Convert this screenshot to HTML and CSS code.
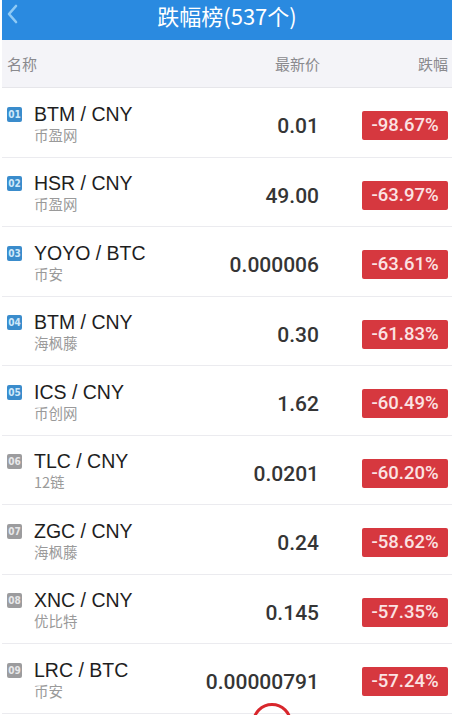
FILE: index.html
```html
<!DOCTYPE html>
<html lang="zh-CN">
<head>
    <meta charset="UTF-8">
    <meta name="viewport" content="width=device-width, initial-scale=1.0">
    <title>跌幅榜</title>
    <link rel="stylesheet" href="styles.css">
</head>
<body>

<div class="page">
    <div class="topbar">
        <a href="#" class="back">
            <svg width="12" height="20" viewBox="0 0 12 20"><path d="M10 2 L3 10 L10 18" fill="none" stroke="#8fcaf5" stroke-width="2.6" stroke-linecap="round" stroke-linejoin="round"/></svg>
        </a>
        <div class="title">跌幅榜(537个)</div>
    </div>

    <div class="thead">
        <span class="th-name">名称</span>
        <span class="th-price">最新价</span>
        <span class="th-change">跌幅</span>
    </div>

    <ul class="list">
        <li class="row">
            <div class="coin"><i class="no blue">01</i><div class="info"><p class="pair">BTM / CNY</p><p class="market">币盈网</p></div></div>
            <div class="price">0.01</div>
            <div class="change">-98.67%</div>
        </li>
        <li class="row">
            <div class="coin"><i class="no blue">02</i><div class="info"><p class="pair">HSR / CNY</p><p class="market">币盈网</p></div></div>
            <div class="price">49.00</div>
            <div class="change">-63.97%</div>
        </li>
        <li class="row">
            <div class="coin"><i class="no blue">03</i><div class="info"><p class="pair">YOYO / BTC</p><p class="market">币安</p></div></div>
            <div class="price">0.000006</div>
            <div class="change">-63.61%</div>
        </li>
        <li class="row">
            <div class="coin"><i class="no blue">04</i><div class="info"><p class="pair">BTM / CNY</p><p class="market">海枫藤</p></div></div>
            <div class="price">0.30</div>
            <div class="change">-61.83%</div>
        </li>
        <li class="row">
            <div class="coin"><i class="no blue">05</i><div class="info"><p class="pair">ICS / CNY</p><p class="market">币创网</p></div></div>
            <div class="price">1.62</div>
            <div class="change">-60.49%</div>
        </li>
        <li class="row">
            <div class="coin"><i class="no">06</i><div class="info"><p class="pair">TLC / CNY</p><p class="market">12链</p></div></div>
            <div class="price">0.0201</div>
            <div class="change">-60.20%</div>
        </li>
        <li class="row">
            <div class="coin"><i class="no">07</i><div class="info"><p class="pair">ZGC / CNY</p><p class="market">海枫藤</p></div></div>
            <div class="price">0.24</div>
            <div class="change">-58.62%</div>
        </li>
        <li class="row">
            <div class="coin"><i class="no">08</i><div class="info"><p class="pair">XNC / CNY</p><p class="market">优比特</p></div></div>
            <div class="price">0.145</div>
            <div class="change">-57.35%</div>
        </li>
        <li class="row">
            <div class="coin"><i class="no">09</i><div class="info"><p class="pair">LRC / BTC</p><p class="market">币安</p></div></div>
            <div class="price">0.00000791</div>
            <div class="change">-57.24%</div>
        </li>
    </ul>

    <div class="mark"></div>
</div>

</body>
</html>
```

FILE: styles.css
```css
* {
    margin: 0;
    padding: 0;
    box-sizing: border-box;
}

body {
    background: #fff;
    font-family: "Liberation Sans", "Noto Sans CJK SC", sans-serif;
    overflow: hidden;
}

li {
    list-style: none;
}

.page {
    position: relative;
    width: 450px;
    margin-left: 2px;
    height: 715px;
    overflow: hidden;
}

.topbar {
    position: relative;
    height: 40px;
    background-color: #2a8ae0;
    text-align: center;
}

.back {
    position: absolute;
    left: 4px;
    top: 4px;
}

.title {
    color: #fff;
    font-size: 22px;
    line-height: 31px;
    font-family: "Noto Sans CJK SC", sans-serif;
}

.thead {
    display: flex;
    align-items: center;
    height: 48px;
    padding: 0 4px 0 5px;
    background-color: #f4f4f8;
    border-bottom: 1px solid #e6e6ea;
    color: #8a8a8e;
    font-size: 15px;
    font-family: "Noto Sans CJK SC", sans-serif;
}

.th-name {
    flex: 1;
}

.th-price {
    width: 100px;
    text-align: right;
    margin-right: 98px;
}

.row {
    display: flex;
    align-items: center;
    height: 69.5px;
    padding: 3px 4px 0 5px;
    border-bottom: 1px solid #ebebef;
}

.coin {
    flex: 1;
    display: flex;
    align-items: flex-start;
}

.no {
    width: 15px;
    height: 15px;
    margin-top: 4px;
    margin-right: 12px;
    border-radius: 2px;
    background-color: #9c9c9e;
    color: #e8e8ea;
    font-style: normal;
    font-size: 10px;
    font-weight: bold;
    line-height: 15px;
    text-align: center;
    font-family: "DejaVu Sans Condensed", "DejaVu Sans", sans-serif;
}

.no.blue {
    background-color: #3a8ccc;
    color: #cfe8fa;
}

.pair {
    font-size: 19.5px;
    line-height: 22px;
    color: #1e1e1e;
}

.market {
    font-size: 14.5px;
    line-height: 20px;
    color: #9a9a9a;
    font-family: "Noto Sans CJK SC", sans-serif;
}

.price {
    margin-top: 5px;
    margin-right: -2px;
    text-align: right;
    font-family: Roboto, sans-serif;
    font-weight: 500;
    font-size: 21px;
    color: #353535;
}

.change {
    width: 86px;
    height: 29px;
    margin-left: 45px;
    margin-top: 4px;
    border-radius: 2px;
    background-color: #d6383f;
    color: #fbe3e3;
    font-family: Roboto, sans-serif;
    font-weight: 500;
    font-size: 18.5px;
    line-height: 29px;
    text-align: center;
}

.mark {
    position: absolute;
    left: 250px;
    top: 703px;
    width: 40px;
    height: 40px;
    border: 3px solid #d8262c;
    border-radius: 50%;
}
```
